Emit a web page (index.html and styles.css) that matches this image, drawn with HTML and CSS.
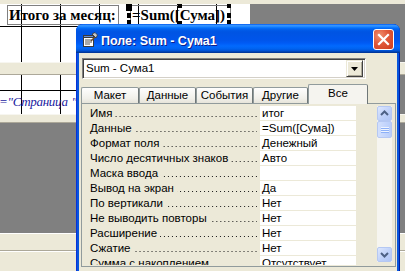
FILE: index.html
```html
<!DOCTYPE html>
<html lang="ru">
<head>
<meta charset="utf-8">
<title>Поле: Sum - Сума1</title>
<link rel="stylesheet" href="styles.css">
</head>
<body>
<div class="screen">
  <div class="report">
    <div class="band band-top"></div>
    <div class="section s1">
      <div class="canvas">
        <div class="tb tb1">Итого за месяц:</div>
        <div class="tb tb2">=Sum([Сума])</div>
        <div class="handle h-move"></div>
        <div class="handle h-lm"></div>
        <div class="handle h-lb"></div>
        <div class="handle h-tm"></div>
        <div class="handle h-bm"></div>
        <div class="handle h-rt"></div>
        <div class="handle h-rm"></div>
        <div class="handle h-rb"></div>
      </div>
      <div class="offreport"></div>
    </div>
    <div class="band band-mid"></div>
    <div class="section s2">
      <div class="canvas">
        <div class="tb3">="Страница "</div>
      </div>
      <div class="offreport"></div>
    </div>
    <div class="band band-low"></div>
    <div class="gray"></div>
    <div class="footer"><div class="footer-line"></div></div>
  </div>

  <div class="dialog">
    <div class="titlebar">
      <svg class="ticon" width="16" height="16" viewBox="0 0 16 16">
        <rect x="1.5" y="3.5" width="10" height="11" fill="#fff" stroke="#3a3a3a"/>
        <rect x="1.5" y="3.5" width="10" height="2" fill="#6b8fd6" stroke="#3a3a3a"/>
        <line x1="3" y1="8" x2="10" y2="8" stroke="#555"/>
        <line x1="3" y1="10" x2="10" y2="10" stroke="#555"/>
        <line x1="3" y1="12" x2="8" y2="12" stroke="#555"/>
        <line x1="9" y1="9" x2="14" y2="4" stroke="#6a4a2a" stroke-width="1.5"/>
        <polygon points="10,2 13,0.5 15.5,3 14,6" fill="#c8c8c8" stroke="#333" stroke-width="0.8"/>
      </svg>
      <span class="title">Поле: Sum - Сума1</span>
      <div class="close">
        <svg width="19" height="19" viewBox="0 0 19 19">
          <path d="M5 5 L14 14 M14 5 L5 14" stroke="#fff" stroke-width="2.2" stroke-linecap="square"/>
        </svg>
      </div>
    </div>
    <div class="client">
      <div class="combo">
        <span class="combo-text">Sum - Сума1</span>
        <div class="dd">
          <svg width="7" height="4" viewBox="0 0 7 4"><polygon points="0,0 7,0 3.5,4" fill="#000"/></svg>
        </div>
      </div>
      <div class="tabs">
        <div class="tab t1">Макет</div>
        <div class="tab t2">Данные</div>
        <div class="tab t3">События</div>
        <div class="tab t4">Другие</div>
        <div class="tab sel">Все</div>
      </div>
      <div class="panel">
        <div class="props">
          <div class="row"><div class="lbl"><span>Имя</span><i class="dots"></i></div><div class="val">итог</div></div>
          <div class="row"><div class="lbl"><span>Данные</span><i class="dots"></i></div><div class="val">=Sum([Сума])</div></div>
          <div class="row"><div class="lbl"><span>Формат поля</span><i class="dots"></i></div><div class="val">Денежный</div></div>
          <div class="row"><div class="lbl"><span>Число десятичных знаков</span><i class="dots"></i></div><div class="val">Авто</div></div>
          <div class="row"><div class="lbl"><span>Маска ввода</span><i class="dots"></i></div><div class="val"></div></div>
          <div class="row"><div class="lbl"><span>Вывод на экран</span><i class="dots"></i></div><div class="val">Да</div></div>
          <div class="row"><div class="lbl"><span>По вертикали</span><i class="dots"></i></div><div class="val">Нет</div></div>
          <div class="row"><div class="lbl"><span>Не выводить повторы</span><i class="dots"></i></div><div class="val">Нет</div></div>
          <div class="row"><div class="lbl"><span>Расширение</span><i class="dots"></i></div><div class="val">Нет</div></div>
          <div class="row"><div class="lbl"><span>Сжатие</span><i class="dots"></i></div><div class="val">Нет</div></div>
          <div class="row"><div class="lbl"><span>Сумма с накоплением</span><i class="dots"></i></div><div class="val">Отсутствует</div></div>
        </div>
        <div class="vscroll">
          <div class="sbtn">
            <svg width="13" height="13" viewBox="0 0 13 13"><polyline points="3,8 6.5,4.5 10,8" fill="none" stroke="#4d6185" stroke-width="2"/></svg>
          </div>
          <div class="thumb">
            <svg width="8" height="8" viewBox="0 0 8 8">
              <line x1="0" y1="1.5" x2="8" y2="1.5" stroke="#eef4fe"/>
              <line x1="0" y1="2.5" x2="8" y2="2.5" stroke="#8cb0f8"/>
              <line x1="0" y1="3.5" x2="8" y2="3.5" stroke="#eef4fe"/>
              <line x1="0" y1="4.5" x2="8" y2="4.5" stroke="#8cb0f8"/>
              <line x1="0" y1="5.5" x2="8" y2="5.5" stroke="#eef4fe"/>
              <line x1="0" y1="6.5" x2="8" y2="6.5" stroke="#8cb0f8"/>
            </svg>
          </div>
          <div class="track"></div>
          <div class="sbtn">
            <svg width="13" height="13" viewBox="0 0 13 13"><polyline points="3,5 6.5,8.5 10,5" fill="none" stroke="#4d6185" stroke-width="2"/></svg>
          </div>
        </div>
      </div>
    </div>
  </div>
</div>
</body>
</html>
```

FILE: styles.css
```css
* { box-sizing: border-box; margin: 0; padding: 0; }
html, body { width: 405px; height: 271px; overflow: hidden; }
body { background: #808080; font-family: "Liberation Sans", Arial, sans-serif; }

.screen { position: relative; width: 405px; height: 271px; overflow: hidden; }

/* report design background */
.report { display: flex; flex-direction: column; height: 271px; }
.band { background: #ece9d8; }
.band-top { height: 4px; }
.band-mid { height: 13px; border-top: 1px solid #f7f6f0; border-bottom: 1px solid #aca899; }
.band-low { height: 9px; border-top: 1px solid #f7f6f0; border-bottom: 1px solid #aca899; }
.section { display: flex; }
.s1 { height: 58px; }
.s2 { height: 39px; }
.gray { height: 110px; background: #808080; }
.footer { height: 38px; background: #ece9d8; border-top: 1px solid #fff; padding-top: 16px; }
.footer-line { height: 2px; border-top: 1px solid #aca899; border-bottom: 1px solid #fff; }

.canvas {
  position: relative;
  width: 250px;
  background-color: #fff;
  background-image:
    linear-gradient(to right, #000 1px, transparent 1px),
    linear-gradient(#000 1px, transparent 1px);
  background-size: 39px 100%, 100% 100%;
  background-repeat: repeat-x, no-repeat;
}
.s1 .canvas { background-position: 21px 0, 0 22px; }
.s2 .canvas { background-position: 21px 0, 0 15px; }
.offreport { flex: 1; background: #808080; }

.tb {
  position: absolute;
  top: 1px;
  height: 20px;
  border: 1px solid #808080;
  padding-left: 1px;
  font-family: "Liberation Serif", "Times New Roman", serif;
  font-weight: bold;
  font-size: 15px;
  line-height: 18px;
  color: #000;
  white-space: nowrap;
}
.tb1 { left: 7px; width: 112px; }
.tb2 { left: 130px; width: 101px; }

.handle { position: absolute; width: 4px; height: 4px; background: #000; }
.h-move { left: 126px; top: 0; width: 6px; height: 7px; }
.h-lm { left: 127px; top: 9px; height: 5px; }
.h-lb { left: 127px; top: 16px; height: 6px; }
.h-tm { left: 178px; top: 0; }
.h-bm { left: 178px; top: 17px; }
.h-rt { left: 227px; top: 0; }
.h-rm { left: 227px; top: 9px; height: 5px; }
.h-rb { left: 227px; top: 16px; height: 6px; }

.tb3 {
  position: absolute;
  left: -1px;
  top: 19px;
  font-family: "Liberation Serif", "Times New Roman", serif;
  font-style: italic;
  font-size: 13px;
  line-height: 16px;
  letter-spacing: -0.3px;
  word-spacing: 1px;
  color: #1a1aa0;
  white-space: pre;
}

/* dialog window */
.dialog {
  position: absolute;
  left: 76px;
  top: 24px;
  width: 324px;
  height: 262px;
  background: #0855dd;
  border-radius: 7px 7px 0 0;
  box-shadow: inset 1px 0 #0831d9, inset -1px 0 #001ea0;
  display: flex;
  flex-direction: column;
}
.titlebar {
  height: 29px;
  flex: none;
  display: flex;
  align-items: center;
  padding: 2px 6px 0 6px;
  border-radius: 7px 7px 0 0;
  background: linear-gradient(to bottom,
    #0058ee 0%, #3593ff 5%, #288eff 8%, #127dff 11%, #036ffc 14%,
    #0262ee 18%, #0057e5 24%, #0054e3 30%, #0055eb 56%, #005bf5 66%,
    #026afe 76%, #0062ef 86%, #0052d6 92%, #0040ab 96%, #003092 100%);
}
.ticon { flex: none; margin-right: 3px; }
.title {
  color: #fff;
  font-weight: bold;
  font-size: 12.5px;
  padding-top: 2px;
  text-shadow: 1px 1px #0f1f8c;
  white-space: nowrap;
}
.close {
  margin-left: auto;
  width: 21px;
  height: 21px;
  border: 1px solid #fff;
  border-radius: 3px;
  background: radial-gradient(circle at 30% 30%, #f0906f 0%, #e0583a 45%, #cc3d1e 100%);
  display: flex;
  align-items: center;
  justify-content: center;
}

.client {
  flex: 1;
  margin: 0 3px;
  background: #ece9d8;
  padding: 5px 0 0 2px;
  font-size: 11.5px;
  color: #000;
}

.combo {
  margin-left: 1px;
  width: 284px;
  height: 21px;
  background: #fff;
  border: 1px solid;
  border-color: #808080 #fff #fff #808080;
  box-shadow: inset 1px 1px #404040, inset -1px -1px #d4d0c8;
  display: flex;
  align-items: center;
  padding: 2px;
}
.combo-text { flex: 1; padding-left: 1px; line-height: 15px; }
.dd {
  width: 17px;
  height: 17px;
  background: #ece9d8;
  border: 1px solid;
  border-color: #ece9d8 #404040 #404040 #ece9d8;
  box-shadow: inset 1px 1px #fff, inset -1px -1px #aca899;
  display: flex;
  align-items: center;
  justify-content: center;
}

.tabs {
  margin-top: 5px;
  height: 19px;
  display: flex;
  align-items: flex-end;
}
.tab {
  height: 16px;
  border: 1px solid #919b9c;
  border-bottom: none;
  border-right-color: #6f7778;
  border-radius: 2px 2px 0 0;
  background: linear-gradient(#fefefe, #f1f0ea 70%, #e6e4da);
  text-align: center;
  line-height: 15px;
  white-space: nowrap;
}
.t1 { width: 58px; }
.t2 { width: 57px; }
.t3 { width: 57px; }
.t4 { width: 55px; }
.sel {
  width: 60px;
  height: 20px;
  margin-bottom: -1px;
  position: relative;
  z-index: 1;
  background: #f5f4ef;
  line-height: 17px;
}

.panel {
  width: 315px;
  height: 164px;
  border: 1px solid #919b9c;
  background: #ece9d8;
  display: flex;
}
.props {
  width: 274px;
  height: 161px;
  overflow: hidden;
  padding: 2px 0 0 8px;
}
.row {
  display: grid;
  grid-template-columns: 170px 96px;
  height: 15px;
}
.lbl {
  display: flex;
  height: 14px;
  line-height: 14px;
  white-space: nowrap;
}
.dots {
  flex: 1;
  align-self: flex-end;
  height: 1px;
  margin: 0 3px 3px 3px;
  background-image: linear-gradient(to right, transparent 3px, #1a1a1a 3px);
  background-size: 4px 1px;
  background-repeat: repeat-x;
  background-position: right bottom;
}
.val {
  height: 14px;
  background: #fff;
  line-height: 14px;
  padding-left: 2px;
  white-space: nowrap;
  overflow: hidden;
}

.vscroll {
  width: 15px;
  height: 156px;
  margin: 2px 0 0 21px;
  display: flex;
  flex-direction: column;
  background: #f6f5f0;
}
.sbtn {
  width: 15px;
  height: 15px;
  flex: none;
  border: 1px solid #b5c8f3;
  border-radius: 2px;
  background: linear-gradient(135deg, #dde7fe, #bccff9 60%, #b0c6f6);
  display: flex;
  align-items: center;
  justify-content: center;
}
.thumb {
  height: 17px;
  flex: none;
  border: 1px solid #b5c8f3;
  border-radius: 2px;
  background: linear-gradient(to right, #d3e0fd, #c5d6fc 50%, #b8cdfa);
  display: flex;
  align-items: center;
  justify-content: center;
}
.track { flex: 1; }
```
